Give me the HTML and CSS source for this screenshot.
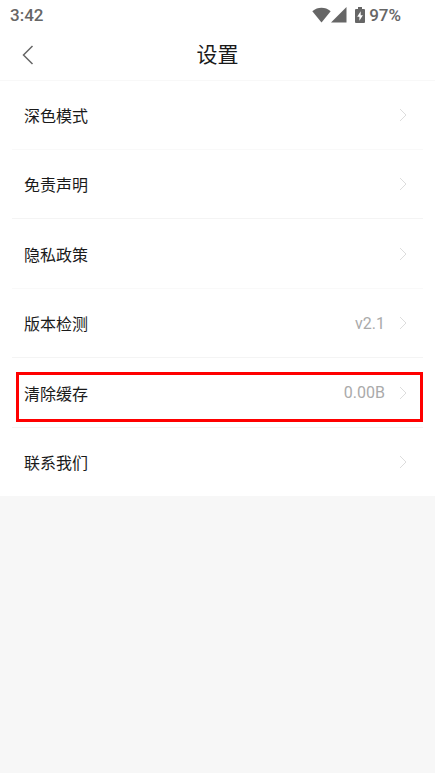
FILE: index.html
```html
<!DOCTYPE html>
<html lang="zh-CN">
<head>
<meta charset="utf-8">
<meta name="viewport" content="width=device-width, initial-scale=1">
<title>设置</title>
<link rel="stylesheet" href="styles.css">
</head>
<body>
<div class="status">
  <span class="time">3:42</span>
  <div class="indicators">
    <svg class="wifi" width="19" height="16" viewBox="0 0 19 16" aria-hidden="true"><path d="M.3 4.2C5.8-.4 13.200-.4 18.700 4.200L9.500 15.500z"/></svg>
    <svg class="signal" width="16" height="16" viewBox="0 0 16 16" aria-hidden="true"><path d="M15.500 0v15.500H0z"/></svg>
    <svg class="battery" width="10" height="16" viewBox="0 0 10 16" aria-hidden="true"><path fill-rule="evenodd" d="M3 0h4v2h2q1 0 1 1v12q0 1-1 1H1q-1 0-1-1V3q0-1 1-1h2zM5.700 4.200 2.200 9.700h2.200v4.100l3.500-5.600H5.700z"/></svg>
    <span class="percent">97%</span>
  </div>
</div>
<header class="header">
  <button class="back" type="button" aria-label="返回"><svg width="12" height="20" viewBox="0 0 12 20" aria-hidden="true"><path d="M10.500 1 1.500 10l9 9"/></svg></button>
  <h1 class="title">设置</h1>
</header>
<main class="list">
  <a class="row faint" href="#"><span class="label">深色模式</span><svg class="chevron" width="8" height="14" viewBox="0 0 8 14" aria-hidden="true"><path d="m1 1 6 6-6 6"/></svg></a>
  <a class="row" href="#"><span class="label">免责声明</span><svg class="chevron" width="8" height="14" viewBox="0 0 8 14" aria-hidden="true"><path d="m1 1 6 6-6 6"/></svg></a>
  <a class="row tall faint" href="#"><span class="label">隐私政策</span><svg class="chevron" width="8" height="14" viewBox="0 0 8 14" aria-hidden="true"><path d="m1 1 6 6-6 6"/></svg></a>
  <a class="row" href="#"><span class="label">版本检测</span><span class="value">v2.1</span><svg class="chevron" width="8" height="14" viewBox="0 0 8 14" aria-hidden="true"><path d="m1 1 6 6-6 6"/></svg></a>
  <a class="row tall marked" href="#"><span class="label">清除缓存</span><span class="value">0.00B</span><svg class="chevron" width="8" height="14" viewBox="0 0 8 14" aria-hidden="true"><path d="m1 1 6 6-6 6"/></svg></a>
  <a class="row" href="#"><span class="label">联系我们</span><svg class="chevron" width="8" height="14" viewBox="0 0 8 14" aria-hidden="true"><path d="m1 1 6 6-6 6"/></svg></a>
</main>
</body>
</html>
```
FILE: styles.css
```css
* {
  box-sizing: border-box;
}

body {
  margin: 0;
  background: #f7f7f7;
  color: #1a1a1a;
  font-family: Roboto, "Noto Sans CJK SC", sans-serif;
  font-size: 16px;
}

.status {
  display: flex;
  align-items: center;
  justify-content: space-between;
  height: 30px;
  padding: 0 34px 0 10px;
  background: #fff;
  color: #666;
  font-size: 17px;
  font-weight: 500;
}

.indicators {
  display: flex;
  align-items: center;
}

.indicators svg {
  fill: #666;
}

.battery {
  margin: 0 4px 0 8px;
}

.header {
  display: grid;
  grid-template-columns: 56px 1fr 56px;
  align-items: center;
  height: 51px;
  background: #fff;
  border-bottom: 1px solid #f8f8f8;
}

.back {
  display: flex;
  align-items: center;
  height: 48px;
  padding: 0 0 0 22px;
  border: 0;
  background: none;
}

.back path {
  fill: none;
  stroke: #666;
  stroke-width: 1.5;
}

.title {
  margin: 0;
  font-size: 21px;
  font-weight: 400;
  line-height: 32px;
  text-align: center;
}

.list {
  background: #fff;
}

.row {
  position: relative;
  display: flex;
  align-items: center;
  height: 69px;
  margin: 0 12px;
  padding: 0 16px 0 12px;
  border-bottom: 1px solid #f4f4f4;
  color: inherit;
  text-decoration: none;
}

.tall {
  height: 70px;
}

.faint {
  border-bottom-color: #f9f9f9;
}

.row:last-child {
  height: 68px;
  border-bottom: 0;
}

.label {
  flex: 1;
}

.value {
  margin-right: 14px;
  color: #aaa;
}

.chevron path {
  fill: none;
  stroke: #ddd;
}

.marked::after {
  content: "";
  position: absolute;
  inset: 14px 0 5px 4px;
  border: 3px solid #f00;
}
```
